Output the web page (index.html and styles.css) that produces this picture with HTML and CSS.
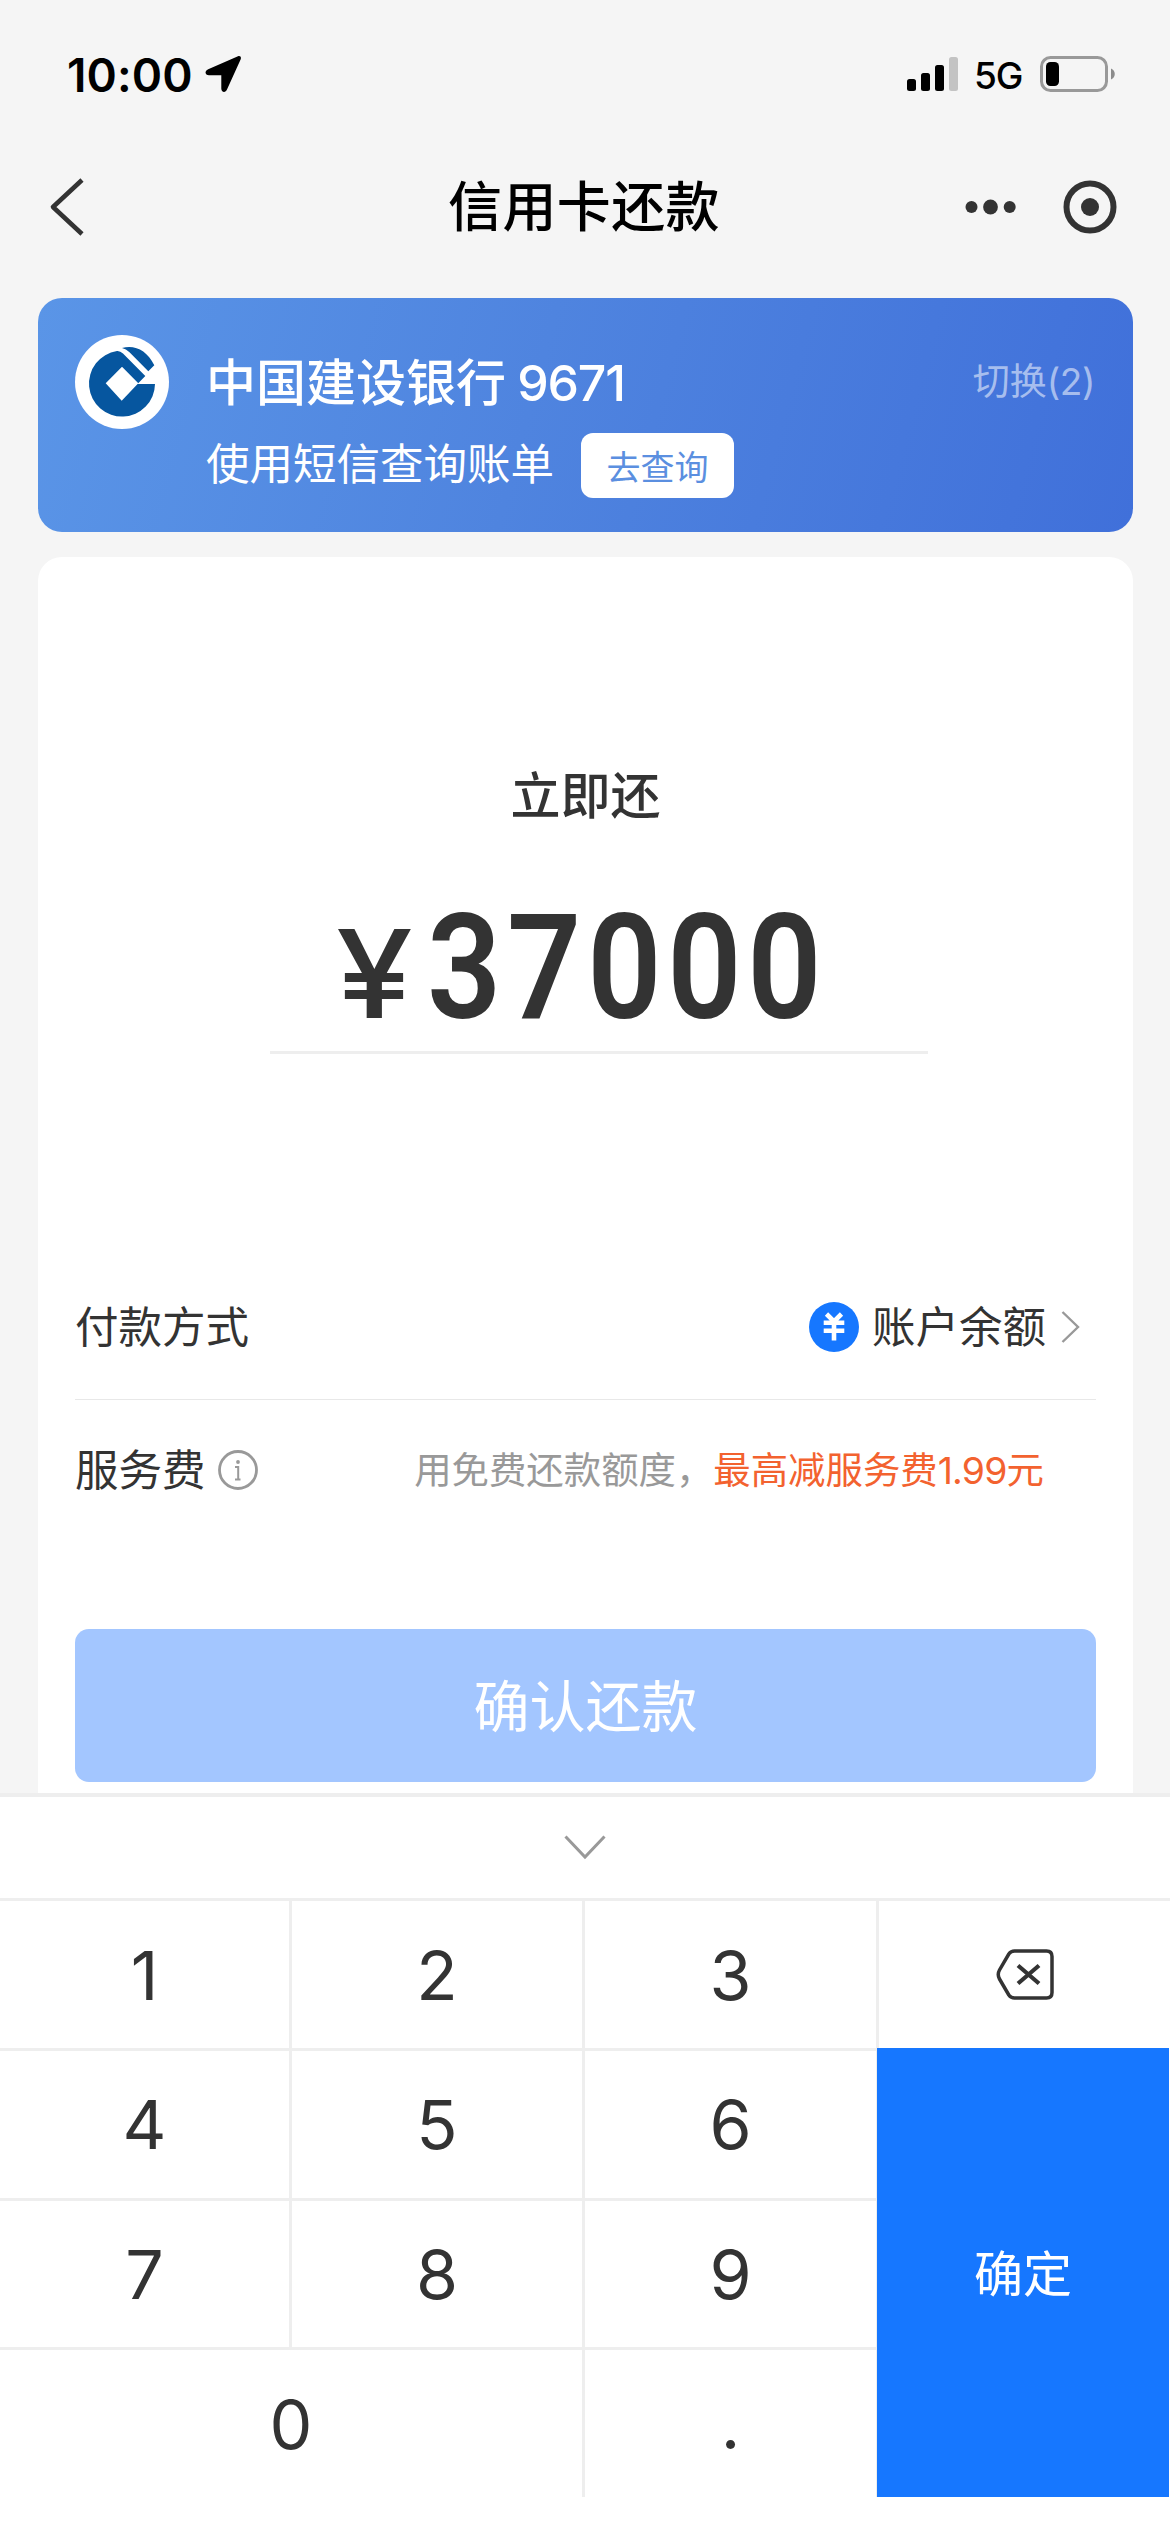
FILE: index.html
```html
<!DOCTYPE html>
<html lang="zh-CN">
<head>
<meta charset="utf-8">
<title>信用卡还款</title>
<link rel="stylesheet" href="styles.css">
</head>
<body>
<div class="screen">
  <header class="status-bar">
    <div class="status-left">
      <span class="time">10:00</span>
      <svg class="location" width="37" height="38" viewBox="0 0 37 38"><path d="M33 1.3 3.2 14.2C-.8 16-.1 20.3 4 20.300H16.300V33.500C16.300 37.600 20.600 38.100 22 34.600L35.600 4.400C36.600 1.900 35 .4 33 1.300Z"/></svg>
    </div>
    <div class="status-right">
      <svg class="signal" width="52" height="36" viewBox="0 0 52 36"><rect x="0" y="23" width="9" height="12" rx="2.500"/><rect x="14" y="17" width="9" height="18" rx="2.500"/><rect x="28" y="9" width="9" height="26" rx="2.500"/><rect x="42" y="1" width="9" height="34" rx="2.500" fill="#c3c3c3"/></svg>
      <span class="network">5G</span>
      <svg class="battery" width="76" height="36" viewBox="0 0 76 36"><rect x="1.500" y="1.500" width="65" height="33" rx="9" fill="none" stroke="#999" stroke-width="3"/><rect x="6" y="6" width="13" height="24" rx="4.500"/><path d="M71 12.500C76 14.500 76 21.500 71 23.500Z" fill="#8c8c8c"/></svg>
    </div>
  </header>

  <nav class="nav-bar">
    <svg class="back" width="36" height="58" viewBox="0 0 36 58"><path d="M33 2 4 29 33 56" fill="none" stroke="#333" stroke-width="4.600" stroke-linejoin="round"/></svg>
    <h1 class="title">信用卡还款</h1>
    <div class="nav-actions">
      <svg width="52" height="16" viewBox="0 0 52 16" fill="#333"><circle cx="6.500" cy="8" r="6"/><circle cx="25.500" cy="8" r="7.400"/><circle cx="44.700" cy="8" r="6"/></svg>
      <svg width="54" height="54" viewBox="0 0 54 54"><circle cx="27" cy="27" r="23.500" fill="none" stroke="#333" stroke-width="6"/><circle cx="27" cy="27" r="9" fill="#333"/></svg>
    </div>
  </nav>

  <section class="bank-card">
    <svg class="bank-logo" width="94" height="94" viewBox="0 0 94 94"><circle cx="47" cy="47" r="47" fill="#fff"/><path fill="#06569f" fill-rule="evenodd" d="M42 16A33 33 0 1 0 80 49H62.500L70.300 41 48 18.500Q45 15.700 42 16ZM47 31.700 63.300 48.300 46.700 65.700 30.700 48.300Z"/><path fill="#06569f" d="M47 13C60 9.500 72 15.500 79.300 30.300L73.300 36.300 54.500 17.300Q51 13.700 47 13Z"/></svg>
    <div class="bank-info">
      <div class="bank-name">中国建设银行 <span class="card-no">9671</span></div>
      <div class="bank-query"><span class="query-text">使用短信查询账单</span><button class="query-btn">去查询</button></div>
    </div>
    <a class="switch">切换<span class="count">(2)</span></a>
  </section>

  <section class="pay-card">
    <h2 class="pay-label">立即还</h2>
    <div class="amount"><span class="currency">¥</span><span class="digits">37000</span></div>
    <div class="row method">
      <span class="row-name">付款方式</span>
      <div class="method-value">
        <svg width="50" height="50" viewBox="0 0 50 50"><circle cx="25" cy="25" r="25" fill="#1677ff"/><path d="M17.500 12 25 19.500 32.500 12M14.700 20.800H35.300M14.700 28.800H35.300M25 19V38.500" fill="none" stroke="#fff" stroke-width="4.600"/></svg>
        <span class="method-name">账户余额</span>
        <svg class="chevron" width="20" height="32" viewBox="0 0 20 32"><path d="M1.500 1 17 16 1.500 31" fill="none" stroke="#999" stroke-width="2.400"/></svg>
      </div>
    </div>
    <div class="row fee">
      <span class="row-name">服务费</span>
      <svg class="info" width="42" height="42" viewBox="0 0 42 42" fill="none" stroke="#999"><circle cx="21" cy="21" r="18.500" stroke-width="2.800"/><circle cx="21" cy="13" r="1.900" fill="#999" stroke="none"/><path d="M18 18H21.200V30.500M18 30.500H23.500" stroke-width="2"/></svg>
      <span class="fee-note">用免费还款额度，<em>最高减服务费<i>1.99</i>元</em></span>
    </div>
    <button class="submit">确认还款</button>
  </section>

  <section class="keyboard">
    <div class="collapse"><svg width="42" height="25" viewBox="0 0 42 25"><path d="M1.500 1.500 21 22 40.500 1.500" fill="none" stroke="#999" stroke-width="3"/></svg></div>
    <div class="keys">
      <div class="key">1</div><div class="key">2</div><div class="key">3</div>
      <div class="key"><svg class="delete" width="58" height="51" viewBox="0 0 58 51" fill="none" stroke="#333"><path d="M18.500 2H50.500Q56 2 56 7.500V43.500Q56 49 50.500 49H18.500Q15 49 12.800 46L3.500 30Q1 25.500 3.500 21L12.800 5Q15 2 18.500 2Z" stroke-width="3.500"/><path d="M22 16.500 43 34.500M43 16.500 22 34.500" stroke-width="4.200"/></svg></div>
      <div class="key">4</div><div class="key">5</div><div class="key">6</div>
      <div class="key confirm">确定</div>
      <div class="key">7</div><div class="key">8</div><div class="key">9</div>
      <div class="key zero">0</div><div class="key">.</div>
    </div>
  </section>
</div>
</body>
</html>
```
FILE: styles.css
```css
* { box-sizing: border-box; margin: 0; padding: 0; }

body {
  width: 1170px;
  height: 2532px;
  overflow: hidden;
  background: #f5f5f5;
  color: #333;
  font-family: "Noto Sans CJK SC", sans-serif;
}

button { border: 0; font: inherit; }
svg { display: block; flex: none; }
em, i { font-style: normal; }

.screen { display: flex; flex-direction: column; height: 2532px; }

.status-bar {
  display: flex;
  justify-content: space-between;
  align-items: center;
  height: 148px;
  padding: 0 54px 0 67px;
  color: #000;
  font-family: Inter, sans-serif;
}
.status-left, .status-right { display: flex; align-items: center; }
.time { padding-top: 1px; font-size: 46px; font-weight: 600; line-height: 54px; letter-spacing: .1px; }
.location { margin-left: 12px; }
.network { margin: 3px 18px 0 15px; font-size: 37px; font-weight: 500; line-height: 44px; letter-spacing: -1.300px; }

.nav-bar {
  display: grid;
  grid-template-columns: 1fr auto 1fr;
  align-items: center;
  height: 117px;
  padding: 0 53px 0 49px;
}
.title {
  padding: 0 0 5px 2px;
  color: #000;
  font-size: 54px;
  font-weight: 500;
  line-height: 78px;
  letter-spacing: .4px;
}
.nav-actions { display: flex; align-items: center; justify-content: flex-end; gap: 46px; }

.bank-card {
  display: flex;
  align-items: flex-start;
  height: 234px;
  margin: 33px 37px 0 38px;
  padding: 37px 38px 0 37px;
  border-radius: 24px;
  background: linear-gradient(105deg, #5a95e7 0%, #4f84df 45%, #4070da 100%);
  color: #fff;
}
.bank-info { flex: 1; margin-left: 37px; }
.bank-name { height: 94px; font-size: 50px; font-weight: 500; line-height: 88px; }
.card-no { font-family: Inter, sans-serif; letter-spacing: -1.200px; }
.bank-query { display: flex; align-items: center; gap: 27px; height: 72px; font-size: 43.500px; }
.query-text { padding-bottom: 7px; }
.query-btn {
  width: 153px;
  height: 65px;
  border-radius: 12px;
  background: #fff;
  color: #5b8fe0;
  font-size: 34px;
}
.switch {
  color: rgba(255, 255, 255, .55);
  font-size: 37px;
  line-height: 88px;
}
.count { font-family: Inter, sans-serif; letter-spacing: -.4px; }

.pay-card {
  display: flex;
  flex-direction: column;
  height: 1236px;
  margin: 25px 37px 0 38px;
  padding: 198px 37px 0;
  border-radius: 24px 24px 0 0;
  background: #fff;
}
.pay-label { height: 77px; text-align: center; font-size: 50px; font-weight: 500; line-height: 74px; }
.amount {
  display: flex;
  align-items: baseline;
  width: 658px;
  height: 222px;
  margin-left: 195px;
  padding: 50px 0 0 66px;
  border-bottom: 3px solid #eee;
}
.currency {
  width: 91px;
  font-family: Inter, sans-serif;
  font-size: 122px;
  font-weight: 500;
  line-height: 172px;
  transform: scaleX(1.13);
  transform-origin: left;
}
.digits {
  font-family: Roboto, sans-serif;
  font-size: 147px;
  font-weight: 600;
  line-height: 172px;
  letter-spacing: 6.500px;
  transform: scaleX(.885);
  transform-origin: left;
}

.row { display: flex; align-items: center; font-size: 43.500px; }
.row-name, .method-name { padding-bottom: 5px; }
.method { height: 145px; margin-top: 201px; border-bottom: 1px solid #e8e8e8; justify-content: space-between; }
.method-value { display: flex; align-items: center; gap: 13px; padding-right: 15px; }
.chevron { margin-left: 2px; }
.fee { height: 139px; }
.info { margin-left: 11px; }
.fee-note { margin-left: auto; padding: 0 52px 4px 0; color: #999; font-size: 37.400px; }
.fee-note em { color: #f3622f; }
.fee-note i { font-family: Inter, sans-serif; letter-spacing: -.8px; }
.submit {
  height: 153px;
  margin-top: 90px;
  padding-bottom: 6px;
  border-radius: 14px;
  background: #a3c6ff;
  color: #fff;
  font-size: 56px;
}

.keyboard { height: 739px; background: #fff; border-top: 4px solid #eee; }
.collapse { display: flex; justify-content: center; align-items: center; height: 101px; }
.keys {
  display: grid;
  grid-template-columns: 289px 290px 291px 291px;
  grid-template-rows: 147px 146.500px 146.500px 147px;
  gap: 3px;
  padding-top: 3px;
  background: #eee;
}
.key {
  display: flex;
  align-items: center;
  justify-content: center;
  background: #fff;
  font-family: Inter, sans-serif;
  font-size: 68px;
  line-height: 80px;
}
.confirm {
  grid-column: 4;
  grid-row: 2 / 5;
  margin: -3px 0 0 -2px;
  padding-bottom: 4px;
  border-right: 1px solid #fff;
  background: #1677ff;
  color: #fff;
  font-family: "Noto Sans CJK SC", sans-serif;
  font-size: 49px;
}
.zero { grid-column: 1 / 3; }
```
